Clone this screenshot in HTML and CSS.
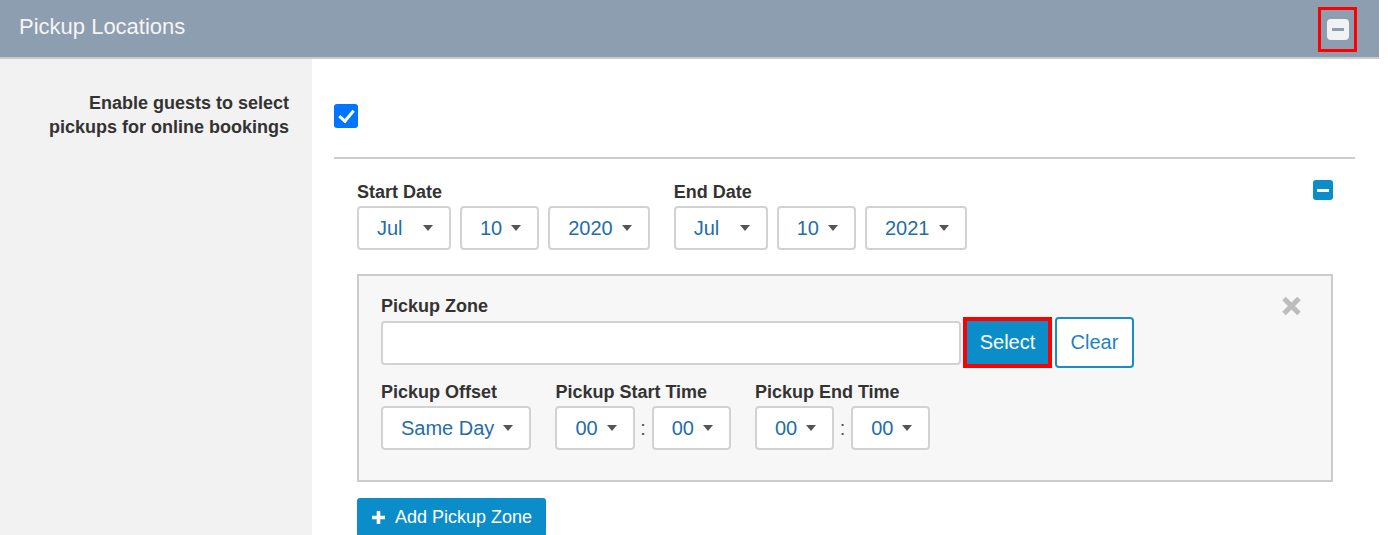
FILE: index.html
```html
<!DOCTYPE html>
<html lang="en">
<head>
<meta charset="utf-8">
<title>Pickup Locations</title>
<link rel="stylesheet" href="styles.css">
</head>
<body>
<div class="panel">
  <div class="panel-head">
    <h2 class="panel-title">Pickup Locations</h2>
    <button class="head-toggle" type="button" aria-label="Collapse"><span class="head-minus"><span class="bar"></span></span></button>
  </div>
  <div class="panel-body">
    <div class="side">
      <label class="side-label" for="enable">Enable guests to select pickups for online bookings</label>
    </div>
    <div class="main">
      <div class="check-row">
        <input id="enable" class="check" type="checkbox" checked>
      </div>
      <div class="range">
        <div class="dates-row">
          <div class="dates">
            <div class="field">
              <div class="field-label">Start Date</div>
              <div class="sel-group">
                <div class="sel sel-month"><span>Jul</span><i class="caret"></i></div>
                <div class="sel"><span>10</span><i class="caret"></i></div>
                <div class="sel"><span>2020</span><i class="caret"></i></div>
              </div>
            </div>
            <div class="field">
              <div class="field-label">End Date</div>
              <div class="sel-group">
                <div class="sel sel-month"><span>Jul</span><i class="caret"></i></div>
                <div class="sel"><span>10</span><i class="caret"></i></div>
                <div class="sel"><span>2021</span><i class="caret"></i></div>
              </div>
            </div>
          </div>
          <button class="blue-minus" type="button" aria-label="Remove range"><span class="bar"></span></button>
        </div>

        <div class="zone">
          <div class="zone-main">
            <div class="field-label zone-label">Pickup Zone</div>
            <div class="zone-row">
              <div class="zone-input"></div>
              <button class="btn-select" type="button">Select</button>
              <button class="btn-clear" type="button">Clear</button>
            </div>
            <div class="offset-row">
              <div class="field">
                <div class="field-label">Pickup Offset</div>
                <div class="sel"><span>Same Day</span><i class="caret"></i></div>
              </div>
              <div class="field">
                <div class="field-label">Pickup Start Time</div>
                <div class="time-group">
                  <div class="sel"><span>00</span><i class="caret"></i></div>
                  <span class="colon">:</span>
                  <div class="sel"><span>00</span><i class="caret"></i></div>
                </div>
              </div>
              <div class="field">
                <div class="field-label">Pickup End Time</div>
                <div class="time-group">
                  <div class="sel"><span>00</span><i class="caret"></i></div>
                  <span class="colon">:</span>
                  <div class="sel"><span>00</span><i class="caret"></i></div>
                </div>
              </div>
            </div>
          </div>
          <button class="zone-close" type="button" aria-label="Remove zone">
            <svg width="21" height="20" viewBox="0 0 21 20"><path d="M3 2.5 L18 17.5 M18 2.5 L3 17.5" stroke="#bdbdbd" stroke-width="5" fill="none"/></svg>
          </button>
        </div>

        <button class="btn-add" type="button">
          <svg width="13" height="13" viewBox="0 0 13 13"><path d="M6.5 0 V13 M0 6.5 H13" stroke="#fff" stroke-width="3.6" fill="none"/></svg>
          <span>Add Pickup Zone</span>
        </button>
      </div>
    </div>
  </div>
</div>
</body>
</html>
```

FILE: styles.css
```css
* { box-sizing: border-box; }

body {
  margin: 0;
  font-family: "Liberation Sans", Arial, sans-serif;
  background: #fff;
  color: #333;
}

button { font-family: inherit; cursor: pointer; }

.panel { width: 1379px; }

.panel-head {
  height: 59px;
  background: #8d9eb0;
  border-bottom: 2px solid #c9c9c9;
  display: flex;
  align-items: center;
  justify-content: space-between;
  padding: 0 22px 0 19px;
}

.panel-title {
  margin: 0 0 3px;
  font-size: 22px;
  font-weight: normal;
  color: #f5f5f5;
}

.head-toggle {
  width: 39px;
  height: 45px;
  border: 3px solid #ff0000;
  background: transparent;
  padding: 0;
  display: flex;
  align-items: center;
  justify-content: center;
  margin-top: 1px;
}

.head-minus {
  width: 22px;
  height: 21px;
  border-radius: 4px;
  background: #f1f2f4;
  display: flex;
  align-items: center;
  justify-content: center;
}
.head-minus .bar {
  width: 12px;
  height: 3px;
  background: #8d9eb0;
}

.panel-body {
  display: flex;
  min-height: 476px;
}

.side {
  width: 312px;
  flex: none;
  background: #f2f2f2;
  padding: 32px 23px 0 0;
  text-align: right;
}

.side-label {
  display: block;
  font-weight: bold;
  font-size: 18px;
  line-height: 24px;
  color: #333;
  padding-left: 20px;
}

.main {
  flex: 1;
  padding: 0 24px 0 22px;
}

.check-row {
  padding: 45px 0 29px;
  border-bottom: 2px solid #cccccc;
  display: flex;
}

.check {
  appearance: none;
  -webkit-appearance: none;
  margin: 0;
  width: 24px;
  height: 24px;
  border-radius: 3px;
  background: #0075ff;
  position: relative;
}
.check::after {
  content: "";
  position: absolute;
  left: 8px;
  top: 3px;
  width: 6px;
  height: 12px;
  border-right: 3px solid #fff;
  border-bottom: 3px solid #fff;
  transform: rotate(40deg);
}

.range {
  padding: 22px 22px 0 23px;
}

.dates-row {
  display: flex;
  justify-content: space-between;
  align-items: flex-start;
}

.dates {
  display: flex;
  gap: 24px;
}

.field {
  display: flex;
  flex-direction: column;
}

.field-label {
  font-weight: bold;
  font-size: 18px;
  line-height: 22px;
  color: #333;
  margin-bottom: 3px;
}

.sel-group {
  display: flex;
  gap: 9px;
}

.sel {
  display: inline-flex;
  align-items: center;
  gap: 9px;
  height: 44px;
  padding: 0 16px 0 18px;
  border: 2px solid #d2d2d2;
  border-radius: 4px;
  background: #fff;
  font-size: 20px;
  color: #1f6ea9;
  white-space: nowrap;
}

.sel-month {
  width: 94px;
  justify-content: space-between;
}

.caret {
  display: block;
  width: 0;
  height: 0;
  border-left: 5.5px solid transparent;
  border-right: 5.5px solid transparent;
  border-top: 6px solid #555;
}

.blue-minus {
  width: 20px;
  height: 20px;
  border: 0;
  padding: 0;
  margin-top: -1px;
  border-radius: 3px;
  background: #0b8dca;
  display: flex;
  align-items: center;
  justify-content: center;
}
.blue-minus .bar {
  width: 12px;
  height: 3px;
  background: #fff;
}

.zone {
  margin-top: 24px;
  border: 2px solid #cccccc;
  background: #f7f7f7;
  padding: 19px 29px 30px 22px;
  display: flex;
  justify-content: space-between;
  align-items: flex-start;
}

.zone-label { margin-bottom: 0; }

.zone-row {
  display: flex;
  align-items: center;
  gap: 2px;
}

.zone-input {
  width: 580px;
  height: 44px;
  border: 2px solid #d2d2d2;
  border-radius: 4px;
  background: #fff;
}

.btn-select {
  width: 89px;
  height: 51px;
  border: 4px solid #ff0000;
  background: #0b8dca;
  color: #fff;
  font-size: 20px;
  padding: 0;
}

.btn-clear {
  width: 79px;
  height: 51px;
  margin-left: 1px;
  border: 2px solid #1b8cc8;
  border-radius: 4px;
  background: #fff;
  color: #1f82c0;
  font-size: 20px;
  padding: 0;
}

.offset-row {
  display: flex;
  gap: 24px;
  margin-top: 13px;
}

.time-group {
  display: flex;
  align-items: center;
}

.colon {
  width: 17px;
  text-align: center;
  font-size: 20px;
  color: #555;
}

.zone-close {
  border: 0;
  background: transparent;
  padding: 0;
  margin-top: 1px;
  display: flex;
}

.btn-add {
  margin-top: 16px;
  width: 189px;
  height: 39px;
  border: 0;
  border-radius: 3px;
  background: #0b8dca;
  color: #fff;
  font-size: 18px;
  display: flex;
  align-items: center;
  gap: 10px;
  padding: 0 0 0 15px;
}
```
